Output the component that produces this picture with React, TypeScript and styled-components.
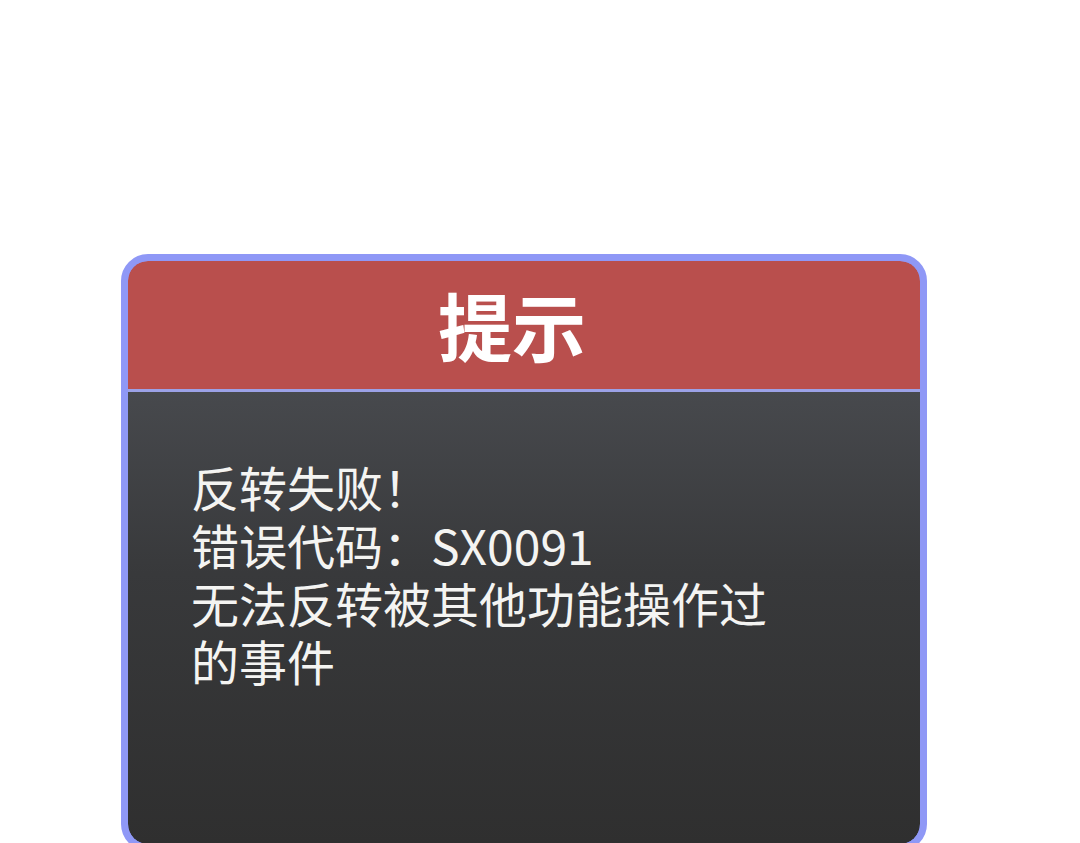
import React from "react";
import styled, { createGlobalStyle } from "styled-components";

const Global = createGlobalStyle`
  html, body { margin: 0; padding: 0; background: #ffffff; }
  body { font-family: "Noto Sans CJK SC", "Noto Sans", sans-serif; overflow: hidden; }
`;

const Page = styled.div`
  width: 1080px;
  height: 843px;
  overflow: hidden;
  padding-top: 254px;
  padding-left: 121px;
  box-sizing: border-box;
`;

const Dialog = styled.div`
  width: 806px;
  height: 597px;
  box-sizing: border-box;
  border: 7px solid #8f98f6;
  border-radius: 27px;
  overflow: hidden;
  display: flex;
  flex-direction: column;
  background: #8f98f6;
`;

const Header = styled.div`
  height: 131px;
  flex: none;
  box-sizing: border-box;
  background: #b94f4d;
  border-radius: 20px 20px 0 0;
  display: flex;
  align-items: center;
  justify-content: center;
  padding: 0 24px 3px 0;
  border-bottom: 3px solid #9ba1e6;
`;

const Title = styled.h1`
  margin: 0;
  color: #ffffff;
  font-size: 74px;
  font-weight: 700;
  line-height: 1;
`;

const Body = styled.div`
  flex: 1;
  background: linear-gradient(180deg, #47494d 0%, #38393b 40%, #2f2f2f 100%);
  border-radius: 0 0 20px 20px;
  padding: 65px 0 0 63px;
`;

const Message = styled.p`
  margin: 0;
  color: #f4f4f2;
  font-size: 48px;
  line-height: 58px;
  font-weight: 400;
  white-space: nowrap;
`;

export default function App() {
  const lines = [
    "反转失败！",
    "错误代码：SX0091",
    "无法反转被其他功能操作过",
    "的事件",
  ];
  return (
    <>
      <Global />
      <Page>
        <Dialog>
          <Header>
            <Title>提示</Title>
          </Header>
          <Body>
            <Message>
              {lines.map((l, i) => (
                <React.Fragment key={l}>
                  {l}
                  {i < lines.length - 1 && <br />}
                </React.Fragment>
              ))}
            </Message>
          </Body>
        </Dialog>
      </Page>
    </>
  );
}
